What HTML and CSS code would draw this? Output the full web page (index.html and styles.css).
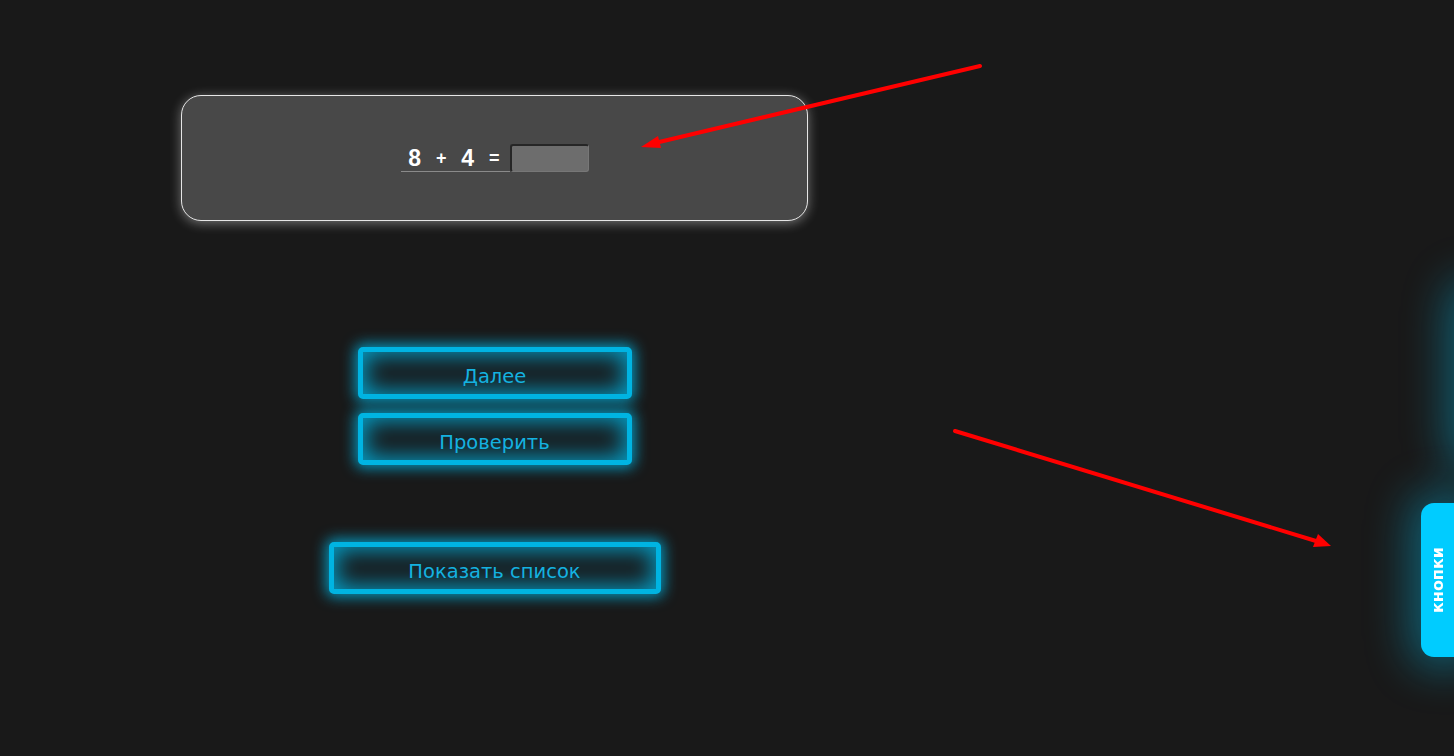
FILE: index.html
```html
<!DOCTYPE html>
<html lang="ru">
<head>
<meta charset="utf-8">
<title>Тренажёр</title>
<link rel="stylesheet" href="styles.css">
</head>
<body>
<main class="column">
  <section class="card">
    <div class="equation">
      <label class="expr"><span class="num">8</span><span class="op">+</span><span class="num">4</span><span class="op">=</span></label>
      <input class="answer" type="text">
    </div>
  </section>
  <div class="actions">
    <button class="neon">Далее</button>
    <button class="neon">Проверить</button>
  </div>
  <button class="neon wide">Показать список</button>
</main>

<div class="ghost-tab"></div>
<div class="side-tab"><span>кнопки</span></div>

<svg class="annot" width="1454" height="756" viewBox="0 0 1454 756">
  <line x1="980" y1="66" x2="655" y2="143" stroke="#ff0000" stroke-width="4" stroke-linecap="round"/>
  <polygon points="641,147 658,136 661,148" fill="#ff0000"/>
  <line x1="955" y1="431" x2="1316" y2="541" stroke="#ff0000" stroke-width="4" stroke-linecap="round"/>
  <polygon points="1331,546 1313,547 1318,534" fill="#ff0000"/>
</svg>
</body>
</html>
```
FILE: styles.css
```css
html, body {
  margin: 0;
  padding: 0;
  background: #191919;
  height: 100%;
  overflow: hidden;
}
body {
  font-family: "DejaVu Sans", "Noto Sans", sans-serif;
}
.column {
  width: 627px;
  margin-left: 181px;
  padding-top: 95px;
  display: flex;
  flex-direction: column;
  align-items: center;
}
.card {
  box-sizing: border-box;
  width: 627px;
  height: 126px;
  background: #484848;
  border: 1px solid #e6e6e6;
  border-radius: 20px;
  box-shadow: 0 2px 12px rgba(255,255,255,0.4);
  display: flex;
  align-items: center;
  justify-content: center;
}
.equation {
  display: flex;
  align-items: flex-end;
}
.expr {
  display: flex;
  width: 109px;
  height: 28px;
  align-items: center;
  padding-left: 1px;
  border-bottom: 1px solid #8a8a8a;
  box-sizing: border-box;
  font-family: "Liberation Sans", Arial, sans-serif;
  font-weight: bold;
  color: #ffffff;
}
.expr span {
  width: 26.5px;
  text-align: center;
  line-height: 28px;
}
.num { font-size: 23px; }
.op { font-size: 18px; }
.answer {
  box-sizing: border-box;
  width: 79px;
  height: 28px;
  margin: 0;
  background: #6d6d6d;
  border: 1px solid #777777;
  border-top: 2px solid #262626;
  border-left: 2px solid #262626;
  border-radius: 3px;
  outline: none;
}
.actions {
  margin-top: 126px;
  display: flex;
  flex-direction: column;
  gap: 14px;
}
.neon {
  box-sizing: border-box;
  width: 274px;
  height: 52px;
  background: #181c1e;
  border: 5px solid #00b4e2;
  border-radius: 5px;
  color: #14b2e0;
  font-family: "DejaVu Sans", "Noto Sans", sans-serif;
  font-size: 19.5px;
  padding: 7px 0 0;
  box-shadow: 0 0 14px 3px rgba(0,180,226,0.8), inset 0 0 22px 3px rgba(0,180,226,0.85);
  cursor: pointer;
}
.wide {
  width: 332px;
  margin-top: 77px;
}
.side-tab {
  position: fixed;
  right: -14px;
  top: 503px;
  width: 47px;
  height: 154px;
  background: #00ccff;
  border-radius: 13px;
  box-shadow: 0 0 45px 10px rgba(0,204,255,0.4);
  display: flex;
  align-items: center;
  justify-content: center;
  padding-right: 14px;
  box-sizing: border-box;
}
.side-tab span {
  writing-mode: vertical-rl;
  transform: rotate(180deg);
  color: #ffffff;
  font-family: "DejaVu Sans", "Noto Sans", sans-serif;
  font-weight: bold;
  font-size: 16px;
}
.ghost-tab {
  position: fixed;
  right: -40px;
  top: 290px;
  width: 36px;
  height: 170px;
  border-radius: 13px;
  background: #00ccff;
  box-shadow: 0 0 45px 10px rgba(0,204,255,0.4);
}
.annot {
  position: absolute;
  left: 0;
  top: 0;
  pointer-events: none;
}
```
